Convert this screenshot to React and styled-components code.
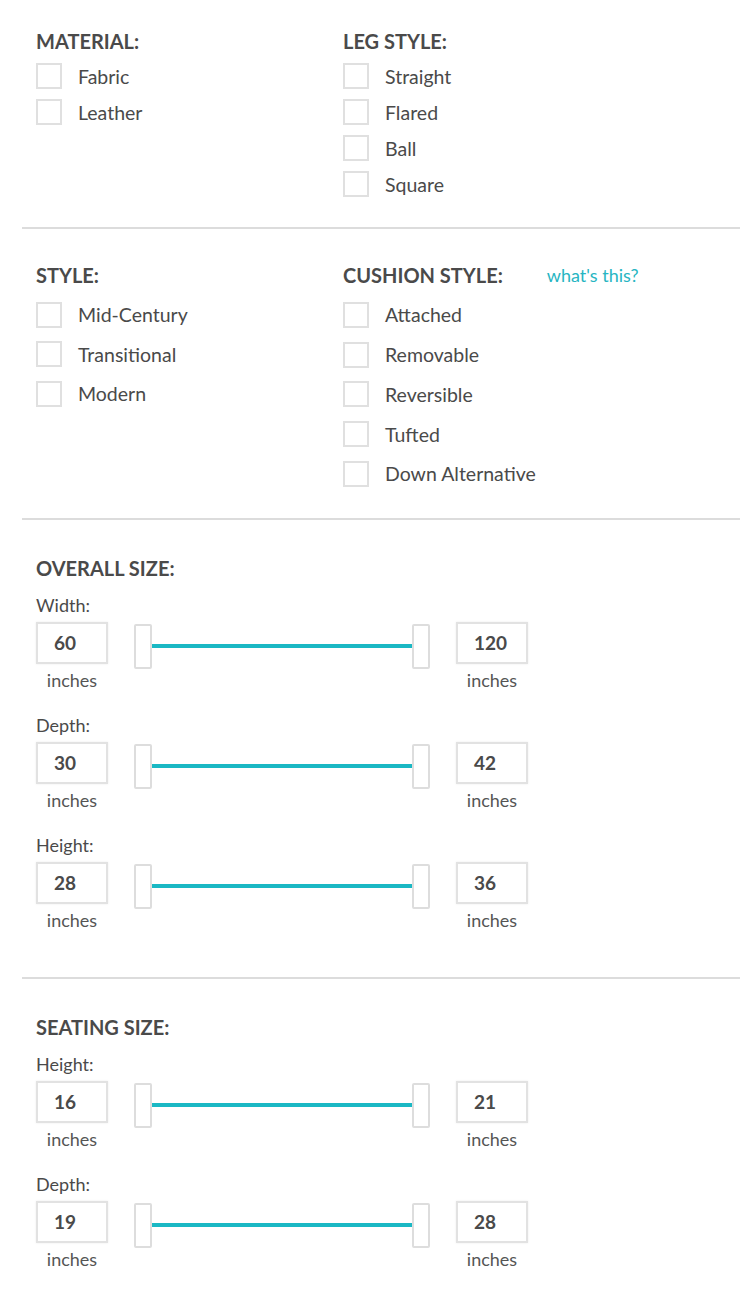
import React from "react";
import styled, { createGlobalStyle } from "styled-components";

const Global = createGlobalStyle`
  body { margin: 0; background: #fff; font-family: "Lato", "Open Sans", sans-serif; color: #444; }
`;

const Wrap = styled.div`
  margin-left: 22px;
  width: 718px;
`;

const Section = styled.section`
  padding: ${(p) => p.$pt}px 0 ${(p) => p.$pb}px 14px;
  border-bottom: ${(p) => (p.$last ? "none" : "2px solid #dcdcdc")};
`;

const Columns = styled.div`
  display: grid;
  grid-template-columns: 307px 1fr;
`;

const Heading = styled.div`
  display: flex;
  align-items: center;
  gap: 44px;
  height: 24px;
  font-size: 20px;
  font-weight: 700;
  color: #4a4a4a;
  margin-bottom: ${(p) => p.$mb}px;
`;

const Help = styled.span`
  font-size: 18px;
  font-weight: 400;
  color: #27b5c2;
`;

const Row = styled.label`
  display: flex;
  align-items: center;
  height: ${(p) => p.$h}px;
  font-size: 19.5px;
  color: #4a4a4a;
`;

const Box = styled.span`
  width: 22px;
  height: 22px;
  border: 2px solid #e0e0e0;
  margin-right: 16px;
  flex: none;
`;

const SizeGroup = styled.div`
  margin-top: ${(p) => p.$mt}px;
`;

const SizeLabel = styled.div`
  height: 24px;
  line-height: 24px;
  font-size: 18px;
  color: #4a4a4a;
  margin-bottom: 5px;
`;

const SliderRow = styled.div`
  display: flex;
  align-items: flex-start;
`;

const ValueCol = styled.div`
  display: flex;
  flex-direction: column;
  align-items: center;
  width: 72px;
`;

const Input = styled.div`
  box-sizing: border-box;
  width: 72px;
  height: 42px;
  border: 2px solid #e2e2e2;
  box-shadow: 0 0 2px rgba(0,0,0,0.08);
  padding-left: 16px;
  display: flex;
  align-items: center;
  font-size: 19px;
  font-weight: 700;
  color: #4a4a4a;
`;

const Unit = styled.div`
  height: 22px;
  line-height: 22px;
  margin-top: 5px;
  font-size: 18px;
  color: #555;
`;

const Slider = styled.div`
  display: flex;
  align-items: center;
  margin: 2px 26px 0;
  width: 296px;
  height: 45px;
`;

const Thumb = styled.span`
  box-sizing: border-box;
  width: 18px;
  height: 45px;
  border: 2px solid #ddd;
  border-radius: 2px;
  background: #fff;
  flex: none;
`;

const Track = styled.span`
  flex: 1;
  height: 4px;
  background: #1ab8c4;
`;

const Checks = ({ items, h }) =>
  items.map((t) => (
    <Row key={t} $h={h}>
      <Box />
      {t}
    </Row>
  ));

const Size = ({ label, min, max, mt }) => (
  <SizeGroup $mt={mt}>
    <SizeLabel>{label}</SizeLabel>
    <SliderRow>
      <ValueCol>
        <Input>{min}</Input>
        <Unit>inches</Unit>
      </ValueCol>
      <Slider>
        <Thumb />
        <Track />
        <Thumb />
      </Slider>
      <ValueCol>
        <Input>{max}</Input>
        <Unit>inches</Unit>
      </ValueCol>
    </SliderRow>
  </SizeGroup>
);

export default function App() {
  return (
    <Wrap>
      <Global />
      <Section $pt={29} $pb={25}>
        <Columns>
          <div>
            <Heading $mb={5}>MATERIAL:</Heading>
            <Checks h={36} items={["Fabric", "Leather"]} />
          </div>
          <div>
            <Heading $mb={5}>LEG STYLE:</Heading>
            <Checks h={36} items={["Straight", "Flared", "Ball", "Square"]} />
          </div>
        </Columns>
      </Section>
      <Section $pt={34} $pb={24}>
        <Columns>
          <div>
            <Heading $mb={8}>STYLE:</Heading>
            <Checks h={39.5} items={["Mid-Century", "Transitional", "Modern"]} />
          </div>
          <div>
            <Heading $mb={8}>
              CUSHION STYLE: <Help>what's this?</Help>
            </Heading>
            <Checks
              h={39.75}
              items={["Attached", "Removable", "Reversible", "Tufted", "Down Alternative"]}
            />
          </div>
        </Columns>
      </Section>
      <Section $pt={36} $pb={46}>
        <Heading $mb={0}>OVERALL SIZE:</Heading>
        <Size mt={13} label="Width:" min="60" max="120" />
        <Size mt={22} label="Depth:" min="30" max="42" />
        <Size mt={22} label="Height:" min="28" max="36" />
      </Section>
      <Section $pt={36} $pb={30} $last>
        <Heading $mb={0}>SEATING SIZE:</Heading>
        <Size mt={13} label="Height:" min="16" max="21" />
        <Size mt={22} label="Depth:" min="19" max="28" />
      </Section>
    </Wrap>
  );
}
